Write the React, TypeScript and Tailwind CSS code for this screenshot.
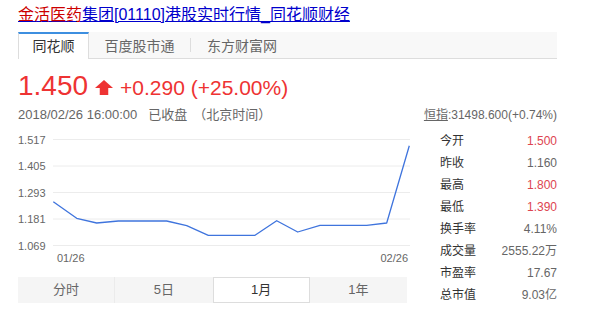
const grid = [9.5, 36, 62.5, 89, 115.5];
const yLabels = ['1.517', '1.405', '1.293', '1.181', '1.069'];

const line = [
  [35.3, 71.7], [58.7, 88.3], [78.7, 93], [100.3, 91], [148.7, 91], [168.7, 95.7],
  [190.3, 105.3], [237, 105.3], [258.7, 90.7], [279.7, 102], [302, 95.3],
  [348.7, 95.3], [368.7, 93], [391.3, 15.7],
];

const stats = [
  { label: '今开', value: '1.500', red: true },
  { label: '昨收', value: '1.160' },
  { label: '最高', value: '1.800', red: true },
  { label: '最低', value: '1.390', red: true },
  { label: '换手率', value: '4.11%' },
  { label: '成交量', value: '2555.22万' },
  { label: '市盈率', value: '17.67' },
  { label: '总市值', value: '9.03亿' },
];

const periods = ['分时', '5日', '1月', '1年'];

function UpArrow() {
  return (
    <svg width="18" height="15" viewBox="0 0 18 15" className="mb-[2px] ml-[7px] mr-[7px] self-baseline">
      <polygon points="0,8 9,0 18,8" fill="#ee3333" />
      <rect x="4.75" y="7.5" width="8.5" height="7.5" fill="#ee3333" />
    </svg>
  );
}

function PriceChart() {
  return (
    <svg width="392" height="137" className="block">
      {grid.map((y, i) => (
        <g key={y}>
          <line x1="35" x2="392" y1={y} y2={y} stroke="#ececec" strokeWidth="1" />
          <text x="0" y={y + 4} fontSize="11" fill="#666" fontFamily="Liberation Sans, sans-serif">
            {yLabels[i]}
          </text>
        </g>
      ))}
      <polyline
        points={line.map((p) => p.join(',')).join(' ')}
        fill="none"
        stroke="#3f74dd"
        strokeWidth="1.3"
        strokeLinejoin="round"
      />
      <text x="39" y="132" fontSize="11" fill="#666" fontFamily="Liberation Sans, sans-serif">01/26</text>
      <text x="390" y="132" fontSize="11" fill="#666" textAnchor="end" fontFamily="Liberation Sans, sans-serif">02/26</text>
    </svg>
  );
}

export default function App() {
  return (
    <div className="w-[610px] h-[312px] overflow-hidden bg-white pl-[18px] pt-[5px] font-['Liberation_Sans','Noto_Sans_CJK_SC',sans-serif]">
      <a className="block w-fit text-[16px] leading-[20px] underline text-[#0000cc]">
        <span className="text-[#cc0000]">金活医药</span>集团[01110]港股实时行情_同花顺财经
      </a>

      {/* source tabs */}
      <div className="mt-[7px] flex w-[539px] h-[27px] bg-[#f8f8f8] border-b border-[#dddddd] text-[14px] leading-[24px]">
        <div className="w-[71px] h-[27px] bg-white border-t-2 border-t-[#3d8fe0] border-x border-x-[#dddddd] text-center text-[#333]">
          同花顺
        </div>
        <div className="w-[101px] pt-[2px] text-center text-[#666]">百度股市通</div>
        <div className="my-[6px] w-px bg-[#dddddd]" />
        <div className="pl-[16px] pt-[2px] text-[#666]">东方财富网</div>
      </div>

      {/* price */}
      <div className="mt-[11px] flex items-baseline h-[32px] leading-[32px] text-[#ee3333]">
        <span className="text-[28px]">1.450</span>
        <UpArrow />
        <span className="text-[21px]">+0.290 (+25.00%)</span>
      </div>

      <div className="mt-[5px] flex w-[539px] items-baseline justify-between leading-[16px] text-[#666]">
        <div className="text-[13px]">
          2018/02/26 16:00:00<span className="ml-[11px]">已收盘</span>
          <span className="ml-[6px]">（北京时间）</span>
        </div>
        <div className="text-[12px]">
          <span className="underline">恒指</span>:31498.600(+0.74%)
        </div>
      </div>

      <div className="mt-[7px] flex">
        <div className="w-[392px]">
          <PriceChart />
          <div className="mt-[10px] grid w-[389px] h-[26px] grid-cols-4 bg-[#f5f5f5] text-[13px] leading-[24px] text-[#666]">
            {periods.map((p, i) => (
              <div
                key={p}
                className={
                  i === 2
                    ? 'bg-white border border-[#dddddd] text-center text-[#333]'
                    : i === 0
                    ? 'border-r border-[#ebebeb] pt-px text-center'
                    : 'pt-px text-center'
                }
              >
                {p}
              </div>
            ))}
          </div>
        </div>

        <div className="ml-[30px] w-[117px] text-[12px]">
          {stats.map((s) => (
            <div key={s.label} className="flex h-[22px] items-center justify-between">
              <span className="text-[#333]">{s.label}</span>
              <span className={s.red ? 'text-[#dd4450]' : 'text-[#666]'}>{s.value}</span>
            </div>
          ))}
        </div>
      </div>
    </div>
  );
}
